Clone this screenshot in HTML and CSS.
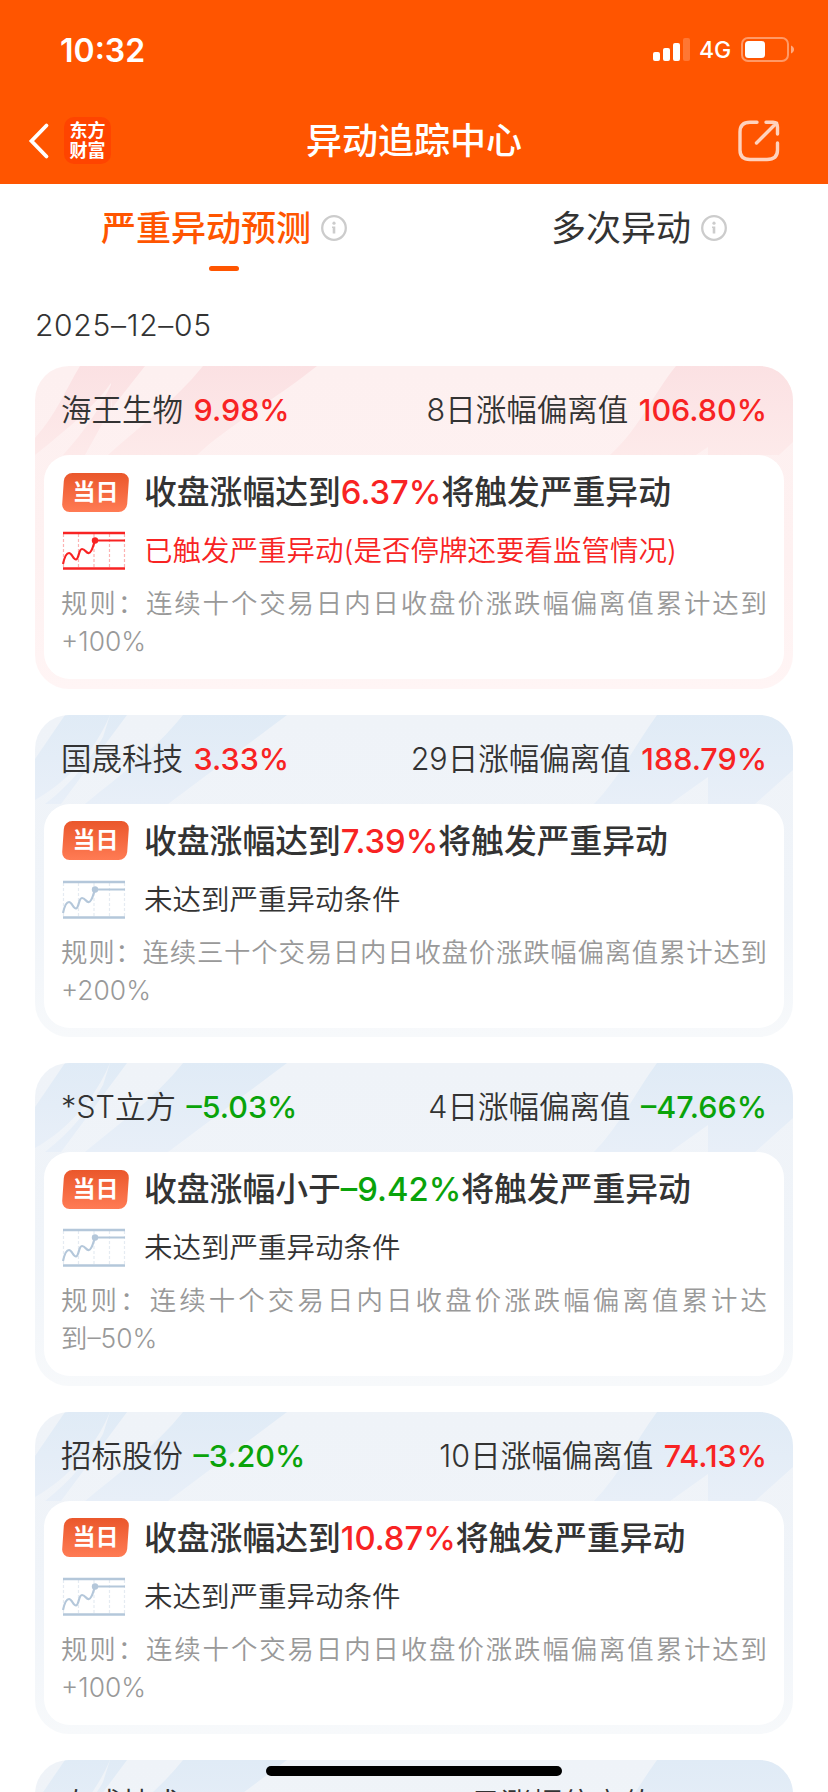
FILE: index.html
```
<!DOCTYPE html>
<html lang="zh-CN">
<head>
<meta charset="UTF-8">
<meta name="viewport" content="width=device-width, initial-scale=1.0">
<title>异动追踪中心</title>
<link rel="stylesheet" href="styles.css">
</head>
<body>
<svg class="defs" width="0" height="0">
    <linearGradient id="fade-blue" x1="0" y1="0" x2="0" y2="1">
        <stop offset="0" stop-color="#e0ebf6"/>
        <stop offset="1" stop-color="#e8eff8"/>
    </linearGradient>
    <linearGradient id="fade-red" x1="0" y1="0" x2="0" y2="1">
        <stop offset="0" stop-color="#fbe1e3"/>
        <stop offset="1" stop-color="#fdeaea"/>
    </linearGradient>
    <symbol id="info" viewBox="0 0 26 26">
        <circle cx="13" cy="13" r="11.8" fill="none" stroke="#ccc" stroke-width="2.3"/>
        <circle cx="13" cy="8.2" r="1.6" fill="#ccc"/>
        <path d="M11 11.5h3.3v7h-2.6v-5.6H11z" fill="#ccc"/>
    </symbol>
    <symbol id="chart" viewBox="0 0 64 40">
        <path d="M1.5 3v34M16.5 3v34M32 3v34M47.5 3v34M62.5 3v34" fill="none" stroke="currentColor" stroke-width="1.2" stroke-dasharray="3 2" opacity=".35"/>
        <path d="M1 2h62M1 37.5h62" fill="none" stroke="currentColor" stroke-width="2.4"/>
        <path d="M1 33C2.5 26 4 22 7 22S11 28.5 14 28.5 16.500 18 20 18 24 22.5 27 22 31 15 33 9.5H63" fill="none" stroke="currentColor" stroke-width="2.2"/>
        <circle cx="33" cy="9.5" r="3.2" fill="currentColor"/>
    </symbol>
    <symbol id="bg-blue" viewBox="0 0 758 89">
        <path d="M30 0H75C60 35 35 65 0 85V44Z"/>
        <path d="M75 0H92L26 89H10C35 70 55 45 68 22Z"/>
        <path d="M148 0H252L133 89H50C85 60 120 35 148 0Z"/>
        <path d="M622 0H758V55L720 89H673V62L635 89H559C585 62 600 30 622 0Z"/>
    </symbol>
    <symbol id="bg-red" viewBox="0 0 758 89">
        <path d="M45 0H110L77 42 76 17C60 40 30 65 0 89V72C20 50 30 25 45 0Z"/>
        <path d="M77 17 76 42 50 89H28C50 65 65 42 77 17Z"/>
        <path d="M168 0H282C245 30 190 62 162 89H73C105 60 140 35 168 0Z"/>
        <path d="M641 0H758V76L744 89H673V81L661 89H575C605 62 618 28 641 0Z"/>
    </symbol>
</svg>

<div class="header">
    <div class="status-bar">
        <span class="time">10:32</span>
        <div class="status-icons">
            <svg width="38" height="24" viewBox="0 0 38 24" fill="#fff">
                <rect x="0" y="14" width="7" height="9" rx="2"/>
                <rect x="10" y="10" width="7" height="13" rx="2"/>
                <rect x="20" y="5" width="7" height="18" rx="2"/>
                <rect x="30" y="0" width="7" height="23" rx="2" opacity=".2"/>
            </svg>
            <span class="network">4G</span>
            <svg width="54" height="26" viewBox="0 0 54 26">
                <rect x="1" y="1" width="46" height="23" rx="6" fill="none" stroke="#fff" stroke-width="2" opacity=".4"/>
                <rect x="4" y="4" width="20" height="17" rx="3.5" fill="#fff"/>
                <path d="M50 8.5c4 1.5 4 6.5 0 8z" fill="#fff" opacity=".5"/>
            </svg>
        </div>
    </div>
    <div class="nav">
        <svg class="back" width="22" height="38" viewBox="0 0 22 38">
            <path d="M18.5 3.5L3.5 19L18.5 34.500" fill="none" stroke="#fff" stroke-width="3.8" stroke-linecap="round"/>
        </svg>
        <div class="logo">东方<br>财富</div>
        <h1 class="title">异动追踪中心</h1>
        <svg class="share" width="42" height="42" viewBox="0 0 42 42">
            <path d="M19 2.2H12C5.5 2.2 2 5.5 2 12V30C2 36.5 5.5 39.5 12 39.5H29C36 39.5 39.5 36.5 39.5 30V23M28 2.2H35C38.5 2.2 39.5 3.5 39.5 7V14M38.5 3L18.500 23" fill="none" stroke="#ffd2bd" stroke-width="3.4" stroke-linecap="round"/>
        </svg>
    </div>
</div>

<div class="tabs">
    <div class="tab active"><span>严重异动预测</span><svg width="26" height="26"><use href="#info"/></svg></div>
    <div class="tab"><span>多次异动</span><svg width="26" height="26"><use href="#info"/></svg></div>
</div>

<div class="date">2025–12–05</div>

<div class="list">
    <div class="card hit">
        <svg class="card-bg" width="758" height="89"><use href="#bg-red"/></svg>
        <div class="card-head">
            <div>海王生物 <b class="up">9.98%</b></div>
            <div>8日涨幅偏离值 <b class="up">106.80%</b></div>
        </div>
        <div class="card-body">
            <div class="row main"><span class="badge"><i>当日</i></span><p>收盘涨幅达到<b class="up">6.37%</b>将触发严重异动</p></div>
            <div class="row sub"><svg class="chart" width="64" height="40"><use href="#chart"/></svg><p>已触发严重异动(是否停牌还要看监管情况)</p></div>
            <p class="rule">规则：连续十个交易日内日收盘价涨跌幅偏离值累计达到<span>+100%</span></p>
        </div>
    </div>

    <div class="card">
        <svg class="card-bg" width="758" height="89"><use href="#bg-blue"/></svg>
        <div class="card-head">
            <div>国晟科技 <b class="up">3.33%</b></div>
            <div>29日涨幅偏离值 <b class="up">188.79%</b></div>
        </div>
        <div class="card-body">
            <div class="row main"><span class="badge"><i>当日</i></span><p>收盘涨幅达到<b class="up">7.39%</b>将触发严重异动</p></div>
            <div class="row sub"><svg class="chart" width="64" height="40"><use href="#chart"/></svg><p>未达到严重异动条件</p></div>
            <p class="rule">规则：连续三十个交易日内日收盘价涨跌幅偏离值累计达到<span>+200%</span></p>
        </div>
    </div>

    <div class="card">
        <svg class="card-bg" width="758" height="89"><use href="#bg-blue"/></svg>
        <div class="card-head">
            <div>*ST立方 <b class="down">–5.03%</b></div>
            <div>4日涨幅偏离值 <b class="down">–47.66%</b></div>
        </div>
        <div class="card-body">
            <div class="row main"><span class="badge"><i>当日</i></span><p>收盘涨幅小于<b class="down">–9.42%</b>将触发严重异动</p></div>
            <div class="row sub"><svg class="chart" width="64" height="40"><use href="#chart"/></svg><p>未达到严重异动条件</p></div>
            <p class="rule">规则：连续十个交易日内日收盘价涨跌幅偏离值累计达<span>到–50%</span></p>
        </div>
    </div>

    <div class="card">
        <svg class="card-bg" width="758" height="89"><use href="#bg-blue"/></svg>
        <div class="card-head">
            <div>招标股份 <b class="down">–3.20%</b></div>
            <div>10日涨幅偏离值 <b class="up">74.13%</b></div>
        </div>
        <div class="card-body">
            <div class="row main"><span class="badge"><i>当日</i></span><p>收盘涨幅达到<b class="up">10.87%</b>将触发严重异动</p></div>
            <div class="row sub"><svg class="chart" width="64" height="40"><use href="#chart"/></svg><p>未达到严重异动条件</p></div>
            <p class="rule">规则：连续十个交易日内日收盘价涨跌幅偏离值累计达到<span>+100%</span></p>
        </div>
    </div>

    <div class="card">
        <svg class="card-bg" width="758" height="89"><use href="#bg-blue"/></svg>
        <div class="card-head">
            <div>泰成技术</div>
            <div>日涨幅偏离值 <b class="up">74.13%</b></div>
        </div>
    </div>
</div>

<div class="home-bar"></div>
</body>
</html>
```
FILE: styles.css
```
* {
    box-sizing: border-box;
}
body {
    margin: 0;
    height: 1792px;
    overflow: hidden;
    position: relative;
    background-color: #fff;
    color: #333;
    font-family: Inter, "Noto Sans CJK SC", sans-serif;
}
p, h1 {
    margin: 0;
}
.defs {
    position: absolute;
}

/* header */
.header {
    height: 184px;
    background-color: #ff5500;
    color: #fff;
}
.status-bar {
    display: flex;
    justify-content: space-between;
    height: 100px;
    padding: 0 33px 0 60px;
    align-items: center;
}
.time {
    font-size: 32px;
    font-weight: 600;
}
.status-icons {
    display: flex;
    align-items: center;
}
.network {
    width: 50px;
    padding-left: 8px;
    font-size: 23px;
    font-weight: 500;
}
.nav {
    display: grid;
    grid-template-columns: 36px 47px 1fr 42px;
    align-items: center;
    height: 81px;
    padding: 0 48px 0 28px;
}
.logo {
    width: 47px;
    height: 47px;
    padding-top: 2px;
    border-radius: 10px;
    background-color: #ff4400;
    font-family: "Noto Sans CJK SC", sans-serif;
    font-size: 18px;
    font-weight: 700;
    line-height: 20px;
    text-align: center;
}
.title {
    padding: 0 21px 5px 0;
    font-size: 36px;
    font-weight: 500;
    text-align: center;
}

/* tabs */
.tabs {
    display: grid;
    grid-template-columns: 378px 378px;
    gap: 37px;
    height: 90px;
    padding-left: 35px;
}
.tab {
    position: relative;
    display: flex;
    justify-content: center;
    align-items: center;
    height: 88px;
    gap: 10px;
    font-size: 35px;
}
.tab span {
    padding-bottom: 5px;
}
.tab.active {
    color: #ff5500;
    font-weight: 500;
}
.tab.active::after {
    content: "";
    position: absolute;
    left: calc(50% - 15px);
    bottom: 1px;
    width: 30px;
    height: 5px;
    border-radius: 3px;
    background-color: #ff5500;
}
.date {
    height: 92px;
    padding-left: 35px;
    font-size: 30px;
    font-weight: 350;
    letter-spacing: 0.7px;
    line-height: 102px;
}

/* cards */
.list {
    display: flex;
    flex-direction: column;
    gap: 26px;
    padding: 0 35px;
}
.card {
    position: relative;
    flex: none;
    height: 322.5px;
    padding: 0 9px 9px;
    border-radius: 34px;
    overflow: hidden;
    background: linear-gradient(#eff3f8, #f0f4f9 60%, #f7f9fb);
}
.card.hit {
    background: linear-gradient(#fdf0f0, #fef1f1 60%, #fff5f5);
}
.card-bg {
    position: absolute;
    left: 0;
    top: 0;
    fill: url(#fade-blue);
}
.hit .card-bg {
    fill: url(#fade-red);
}
.card-head {
    position: relative;
    display: flex;
    justify-content: space-between;
    align-items: center;
    height: 89px;
    padding: 0 17px 5px;
    font-size: 30.5px;
    font-weight: 350;
    white-space: nowrap;
}
b {
    font-weight: 450;
}
.card-head b {
    margin-left: 2px;
}
.up {
    color: #f82323;
}
.down {
    color: #0aa30a;
}
.card-body {
    position: relative;
    height: 224px;
    padding: 14px 17px 0;
    border-radius: 26px;
    background-color: #fff;
}
.row {
    display: flex;
    align-items: center;
    height: 46px;
    white-space: nowrap;
}
.row p {
    line-height: 46px;
}
.main {
    font-size: 32.8px;
    font-weight: 500;
}
.badge {
    width: 65px;
    height: 39px;
    margin: 0 16px 0 2px;
    border-radius: 8px;
    background: linear-gradient(#ea572b, #ff7b54);
    color: #fff;
    font-size: 23px;
    font-weight: 700;
    line-height: 38px;
    text-align: center;
    transform: skewX(-4deg);
}
.badge i {
    display: block;
    font-style: normal;
    transform: skewX(4deg);
}
.sub {
    margin-top: 13px;
    font-size: 28.5px;
    font-weight: 350;
}
.chart {
    margin: 0 18px 0 1px;
    color: #b4c7da;
}
.hit .sub,
.hit .chart {
    color: #f82323;
}
.rule {
    margin-top: 10px;
    color: #999;
    font-size: 26.4px;
    font-weight: 350;
    line-height: 38px;
    text-align: justify;
}
.rule span {
    white-space: nowrap;
}

.home-bar {
    position: absolute;
    left: 266px;
    top: 1766px;
    width: 296px;
    height: 10px;
    border-radius: 5px;
    background-color: #000;
}
```
